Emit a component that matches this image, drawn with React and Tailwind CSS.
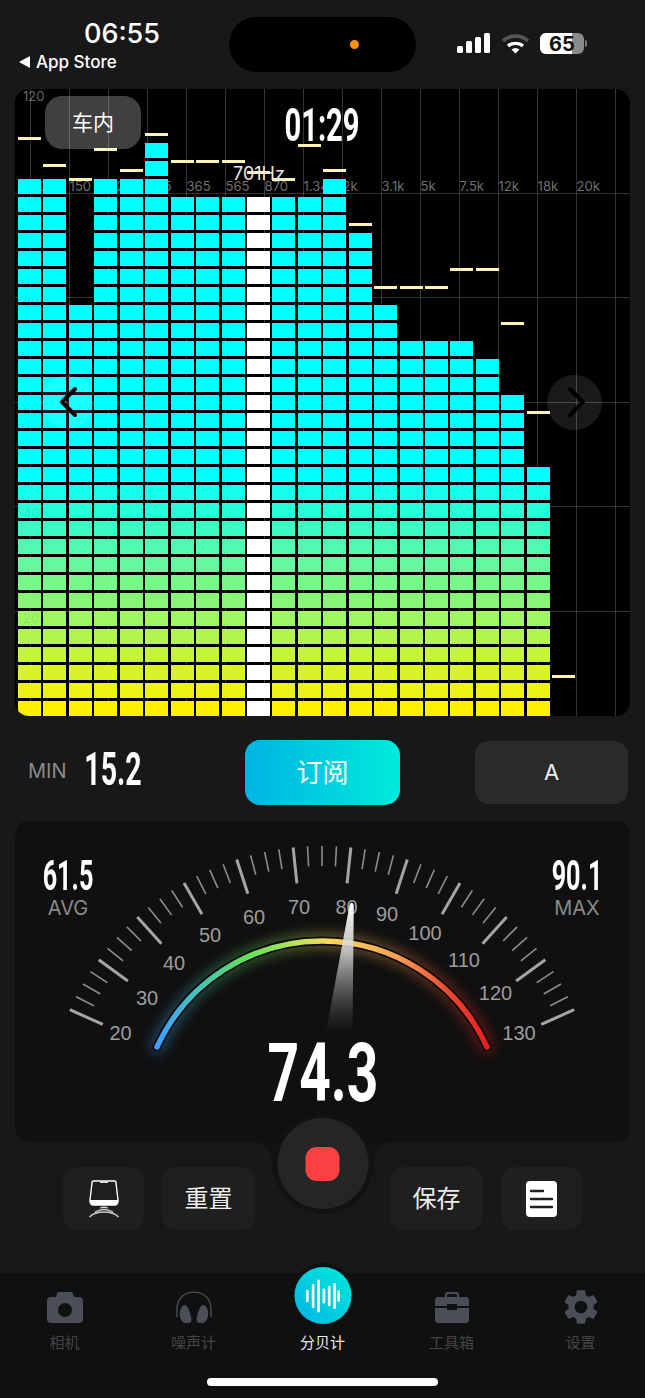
import { MdSettings } from 'react-icons/md';

const FONT = "font-['Inter','Noto_Sans_CJK_SC',sans-serif]";

// rows lit per column, and y of the peak marker (page px)
const COLUMNS = [
  { rows: 30, peak: 138 }, { rows: 30, peak: 165 }, { rows: 23, peak: 179 }, { rows: 30, peak: 149 },
  { rows: 30, peak: 170 }, { rows: 32, peak: 134 }, { rows: 29, peak: 161 }, { rows: 29, peak: 161 },
  { rows: 29, peak: 161 }, { rows: 29, peak: 172, white: true }, { rows: 29, peak: 179 }, { rows: 29, peak: 145 },
  { rows: 30, peak: 170 }, { rows: 27, peak: 224 }, { rows: 23, peak: 287 }, { rows: 21, peak: 287 },
  { rows: 21, peak: 287 }, { rows: 21, peak: 269 }, { rows: 20, peak: 269 }, { rows: 18, peak: 323 },
  { rows: 14, peak: 412 }, { rows: 0, peak: 676 },
];

const FREQS = ['60', '150', '220', '245', '365', '565', '870', '1.34', '2k', '3.1k', '5k', '7.5k', '12k', '18k', '20k'];
const DB_LINES = [104, 208, 313, 417, 522];
const DB_LABELS = [['100', 111], ['80', 214], ['60', 321], ['40', 425], ['20', 530]];

const rowColor = (i) => {
  const t = Math.min(i / 13, 1);
  return `rgb(${Math.round(255 * (1 - t))},${Math.round(241 + 14 * t)},${Math.round(255 * t)})`;
};

const Bars = () => (
  <div className="relative flex h-full items-end gap-[2.45px] pl-[3px]">
    {COLUMNS.map((col, c) => (
      <div key={c} className="relative flex h-full w-[23px] shrink-0 flex-col-reverse gap-[2.5px]">
        {Array.from({ length: col.rows }).map((_, i) => (
          <div
            key={i}
            className="h-[15.5px] shrink-0"
            style={{ background: col.white ? '#ffffff' : rowColor(i) }}
          />
        ))}
        <div
          className="absolute left-0 right-0 h-[3px] bg-[#fdf3b4]"
          style={{ bottom: 716 - col.peak - 1.5 }}
        />
      </div>
    ))}
  </div>
);

const Spectrum = () => (
  <div className="relative mx-[15px] h-[627px] overflow-hidden rounded-[14px] bg-black">
    <div className="absolute left-[8px] top-[0px] text-[13px] leading-[15px] text-[#666]">120</div>
    {FREQS.map((f, i) => (
      <div
        key={f}
        className="absolute top-[91px] text-[13px] leading-[12px] text-[#707070]"
        style={{ left: 15.6 + 39 * i }}
      >
        {f}
      </div>
    ))}
    {/* grid runs behind the bars */}
    {Array.from({ length: 16 }).map((_, i) => (
      <div key={i} className="absolute bottom-0 top-0 w-px bg-white/20" style={{ left: 15 + 39 * i }} />
    ))}
    {DB_LINES.map((y) => (
      <div key={y} className="absolute left-0 right-0 h-px bg-white/20" style={{ top: y }} />
    ))}
    <Bars />
    {DB_LABELS.map(([label, y]) => (
      <div key={label} className="absolute left-[8px] text-[13px] leading-[15px] text-black/10" style={{ top: y - 8 }}>
        {label}
      </div>
    ))}
    <div className="absolute left-[30px] top-[7px] flex h-[53px] w-[96px] items-center justify-center rounded-[17px] bg-white/25 text-[21px] text-white">
      车内
    </div>
    <div className="absolute left-[207px] top-[12px] w-[200px] origin-center scale-x-[0.62] text-center font-['Roboto'] text-[47px] font-bold leading-[47px] text-white">
      01:29
    </div>
    <div className="absolute left-[218px] top-[79px] text-[18px] leading-[12px] text-[#e8e8e8]">701Hz</div>
    <div className="absolute left-[26px] top-[286px] h-[54px] w-[54px] rounded-full bg-white/10" />
    <svg className="absolute left-[40px] top-[297px]" width="26" height="32" viewBox="0 0 26 32" fill="none">
      <path d="M20 3 L7 16 L20 29" stroke="#000" strokeWidth="4" strokeLinecap="round" strokeLinejoin="round" />
    </svg>
    <div className="absolute left-[532px] top-[286px] h-[55px] w-[55px] rounded-full bg-white/10" />
    <svg className="absolute left-[548px] top-[297px]" width="26" height="32" viewBox="0 0 26 32" fill="none">
      <path d="M7 3 L20 16 L7 29" stroke="#000" strokeWidth="4" strokeLinecap="round" strokeLinejoin="round" />
    </svg>
  </div>
);

const StatusBar = () => (
  <div className="relative flex h-[89px] items-start">
    <div className="w-[229px] pl-[19px]">
      <div className="mt-[18px] w-[206px] text-center text-[27px] font-medium leading-[32px] text-white">06:55</div>
      <div className="mt-[1px] flex items-center gap-[6px] text-[17px] font-medium leading-[22px] text-white">
        <svg width="11" height="12" viewBox="0 0 11 12"><path d="M11 0 V12 L0 6 Z" fill="#fff" /></svg>
        <span>App Store</span>
      </div>
    </div>
    <div className="mt-[17px] flex h-[55px] w-[187px] items-center justify-end rounded-full bg-black pr-[57px]">
      <div className="h-[9px] w-[9px] rounded-full bg-[#f7930e]" />
    </div>
    <div className="ml-[41px] mt-[33px] flex h-[21px] items-end">
      <div className="mb-[1px] flex items-end gap-[3px]">
        <div className="h-[7px] w-[6px] rounded-[1.5px] bg-white" />
        <div className="h-[12px] w-[6px] rounded-[1.5px] bg-white" />
        <div className="h-[16px] w-[6px] rounded-[1.5px] bg-white" />
        <div className="h-[20px] w-[6px] rounded-[1.5px] bg-white" />
      </div>
      <svg className="ml-[11px]" width="29" height="20" viewBox="0 0 29 20" fill="none">
        <path d="M2 7 C9 0.5 20 0.5 27 7" stroke="#555" strokeWidth="3.6" />
        <path d="M7 12 C11 8.5 18 8.5 22 12" stroke="#fff" strokeWidth="3.4" />
        <path d="M10.5 15.5 L14.5 19.5 L18.5 15.5 C16 13.5 13 13.5 10.5 15.5 Z" fill="#fff" />
      </svg>
      <div className="relative ml-[10px] flex h-[21px] w-[44px] items-center justify-center overflow-hidden rounded-[6px] bg-[#8a8a8a]">
        <div className="absolute bottom-0 left-0 top-0 w-[32px] bg-white" />
        <span className="relative text-[20px] font-bold leading-none text-[#111]">65</span>
      </div>
      <div className="mb-[7px] ml-[1px] h-[7px] w-[2px] rounded-r-full bg-[#777]" />
    </div>
  </div>
);

const ControlRow = () => (
  <div className="flex h-[105px] items-center pl-[28px] pr-[17px] pt-[8px]">
    <div className="relative h-[64px] w-[217px]">
      <span className="absolute left-0 top-[18px] text-[20px] leading-[24px] text-[#8a8a8a]">MIN</span>
      <span className="absolute left-[35px] top-[5px] w-[100px] origin-center scale-x-[0.62] text-center font-['Roboto'] text-[46px] font-bold leading-[46px] text-white">
        15.2
      </span>
    </div>
    <div className="flex h-[65px] w-[155px] items-center justify-center rounded-[15px] bg-gradient-to-r from-[#00b4e2] to-[#00eadb] text-[26px] text-white">
      订阅
    </div>
    <div className="ml-[75px] flex h-[63px] w-[153px] items-center justify-center rounded-[14px] bg-[#2a2a2a] text-[22px] text-[#eee]">
      A
    </div>
  </div>
);

const CX = 322;
const CY = 1122;
const R = 276;

const tickLine = (n) => {
  const a = ((-66 + n * 3) * Math.PI) / 180;
  const major = n % 4 === 0;
  const r2 = R - (major ? 36 : 20);
  return (
    <line
      key={n}
      x1={CX + R * Math.sin(a)}
      y1={CY - R * Math.cos(a)}
      x2={CX + r2 * Math.sin(a)}
      y2={CY - r2 * Math.cos(a)}
      stroke={major ? '#a4a4a4' : '#8c8c8c'}
      strokeWidth={major ? 3 : 1.6}
    />
  );
};

const GAUGE_LABELS = [
  ['20', 120.5, 1033], ['30', 147, 998], ['40', 174, 963], ['50', 210, 935], ['60', 254, 917], ['70', 299, 907],
  ['80', 346.5, 907], ['90', 387, 914], ['100', 425, 933], ['110', 464, 960], ['120', 495.5, 993], ['130', 519, 1033],
];

const ARC = 'M157 1047 A181.4 181.4 0 0 1 487 1047';

const Gauge = () => (
  <div className="relative mx-[15px] flex h-[321px] justify-between overflow-hidden rounded-[14px] bg-[#101010] px-[3px] pt-[38px]">
    <svg className="absolute inset-0" width="615" height="321" viewBox="15 821 615 321" fill="none">
      <defs>
        <linearGradient id="arcGrad" gradientUnits="userSpaceOnUse" x1="157" y1="0" x2="487" y2="0">
          <stop offset="0" stopColor="#3f9fff" />
          <stop offset="0.14" stopColor="#45c6b0" />
          <stop offset="0.27" stopColor="#5fe05a" />
          <stop offset="0.42" stopColor="#b6e35a" />
          <stop offset="0.52" stopColor="#f8d95a" />
          <stop offset="0.72" stopColor="#f9a155" />
          <stop offset="0.88" stopColor="#ee4a2e" />
          <stop offset="1" stopColor="#e81e1e" />
        </linearGradient>
        <linearGradient id="needleGrad" gradientUnits="userSpaceOnUse" x1="0" y1="903" x2="0" y2="1032">
          <stop offset="0" stopColor="#ffffff" />
          <stop offset="0.4" stopColor="#cfcfcf" stopOpacity="0.85" />
          <stop offset="1" stopColor="#777" stopOpacity="0" />
        </linearGradient>
        <filter id="glow" x="-20%" y="-40%" width="140%" height="180%">
          <feGaussianBlur stdDeviation="7" />
        </filter>
      </defs>
      {Array.from({ length: 45 }).map((_, n) => tickLine(n))}
      {GAUGE_LABELS.map(([t, x, y]) => (
        <text key={t} x={x} y={y} textAnchor="middle" dominantBaseline="central" fontFamily="Liberation Sans" fontSize="20" fill="#9c9c9c">
          {t}
        </text>
      ))}
      <path d={ARC} stroke="url(#arcGrad)" strokeWidth="12" strokeLinecap="round" opacity="0.45" filter="url(#glow)" />
      <path d={ARC} stroke="#0b0b0b" strokeWidth="9" strokeLinecap="round" />
      <path d={ARC} stroke="url(#arcGrad)" strokeWidth="5.5" strokeLinecap="round" />
      <path d="M349.6 905 Q351.7 900 353.8 905 L352.5 1032 L326 1032 Z" fill="url(#needleGrad)" />
    </svg>
    <StatBlock value="61.5" label="AVG" />
    <StatBlock value="90.1" label="MAX" />
    <div className="absolute left-[158px] top-[212px] w-[300px] origin-center scale-x-[0.68] text-center font-['Roboto'] text-[81px] font-bold leading-[81px] text-white">
      74.3
    </div>
  </div>
);

const StatBlock = ({ value, label }) => (
  <div className="relative flex w-[100px] flex-col items-center">
    <div className="w-full origin-center scale-x-[0.6] text-center font-['Roboto'] text-[42px] font-bold leading-[34px] text-white">
      {value}
    </div>
    <div className="mt-[3px] text-[20px] leading-[24px] text-[#8a8a8a]">{label}</div>
  </div>
);

const ActionButton = ({ className, children }) => (
  <div className={`flex h-[63px] items-center justify-center rounded-[14px] bg-[#1f1f1f] text-[24px] text-[#eee] ${className}`}>
    {children}
  </div>
);

const PhoneStandIcon = () => (
  <svg width="30" height="38" viewBox="0 0 30 38" fill="none">
    <path d="M4.5 1 H25.5 Q27 1 27 3 L29 20 Q29.3 25 26 25 H4 Q0.7 25 1 20 L3 3 Q3 1 4.5 1 Z" stroke="#fff" strokeWidth="1.4" />
    <path d="M1 20 H29 Q29.3 25 26 25 H4 Q0.7 25 1 20 Z" fill="#fff" />
    <rect x="11" y="1" width="8" height="2" fill="#ddd" />
    <path d="M11 28 Q15 26.5 19 28 M6 32 Q15 27 24 32 M0.5 37 Q5 32 15 32 Q25 32 29.5 37" stroke="#ccc" strokeWidth="1.3" />
  </svg>
);

const DocIcon = () => (
  <svg width="31" height="36" viewBox="0 0 31 36" fill="none">
    <rect width="31" height="36" rx="4" fill="#fff" />
    <path d="M5 10 H17 M5 18 H26 M5 26 H26" stroke="#1f1f1f" strokeWidth="2.4" strokeLinecap="round" />
  </svg>
);

const ButtonRow = () => (
  <div className="relative flex h-[131px] items-start justify-between px-[63px] pt-[25px]">
    {/* notch under the record button */}
    <div className="absolute left-[272px] top-0 h-[30px] w-[102px] bg-[#121212]" />
    <div className="absolute left-[252px] top-0 h-[20px] w-[20px] bg-[#121212]">
      <div className="h-full w-full rounded-tr-[20px] bg-[#181818]" />
    </div>
    <div className="absolute left-[374px] top-0 h-[20px] w-[20px] bg-[#121212]">
      <div className="h-full w-full rounded-tl-[20px] bg-[#181818]" />
    </div>
    <div className="relative flex gap-[18px]">
      <ActionButton className="w-[81px]"><PhoneStandIcon /></ActionButton>
      <ActionButton className="w-[93px]">重置</ActionButton>
    </div>
    <div className="relative flex gap-[18px]">
      <ActionButton className="w-[93px]">保存</ActionButton>
      <ActionButton className="w-[81px]"><DocIcon /></ActionButton>
    </div>
    <div className="absolute left-1/2 top-[-29px] flex h-[101px] w-[101px] -translate-x-1/2 items-center justify-center rounded-full bg-[#121212]">
      <div className="flex h-[91px] w-[91px] items-center justify-center rounded-full bg-[#252525]">
        <div className="h-[34px] w-[34px] rounded-[11px] bg-[#f94144]" />
      </div>
    </div>
  </div>
);

const TAB_GREY = '#4a4f57';

const CameraIcon = () => (
  <svg width="36" height="31" viewBox="0 0 36 31">
    <path
      fillRule="evenodd"
      fill={TAB_GREY}
      d="M12 0 H24 Q26 0 26.5 3 L27 5 H32 Q36 5 36 9 V27 Q36 31 32 31 H4 Q0 31 0 27 V9 Q0 5 4 5 H9 L9.5 3 Q10 0 12 0 Z M18 11 A7 7 0 1 0 18 25 A7 7 0 1 0 18 11 Z"
    />
  </svg>
);

const HeadphonesIcon = () => (
  <svg width="38" height="34" viewBox="0 0 38 34" fill="none">
    <path d="M2 27 V19 C2 -3.5 36 -3.5 36 19 V27" stroke={TAB_GREY} strokeWidth="1.3" />
    <path d="M10 15 C13 15 16 24 16.5 30 Q16.5 33 13 33 H10 C7 33 4 27 5 22 C5.5 18 7.5 15 10 15 Z" fill={TAB_GREY} />
    <path d="M28 15 C25 15 22 24 21.5 30 Q21.5 33 25 33 H28 C31 33 34 27 33 22 C32.5 18 30.5 15 28 15 Z" fill={TAB_GREY} />
  </svg>
);

const ToolboxIcon = () => (
  <svg width="34" height="31" viewBox="0 0 34 31" fill="none">
    <path d="M11 6 V3 Q11 1 13 1 H21 Q23 1 23 3 V6" stroke={TAB_GREY} strokeWidth="2" />
    <path d="M3 5 H31 Q34 5 34 8 V14 H22 V12 H12 V14 H0 V8 Q0 5 3 5 Z" fill={TAB_GREY} />
    <path d="M0 16 H12 V18 H22 V16 H34 V28 Q34 31 31 31 H3 Q0 31 0 28 Z" fill={TAB_GREY} />
  </svg>
);

const WaveIcon = () => (
  <svg width="36" height="34" viewBox="0 0 40 38" fill="none" stroke="#fff" strokeWidth="3" strokeLinecap="round">
    <path d="M3 13.5 V24.5 M9.5 7 V31 M15.5 2 V36 M21.5 12 V26 M27.5 9 V29 M33.5 6 V32 M38 14 V24" />
  </svg>
);

const TABS = [
  { label: '相机', icon: <CameraIcon /> },
  { label: '噪声计', icon: <HeadphonesIcon /> },
  { label: '分贝计', active: true },
  { label: '工具箱', icon: <ToolboxIcon /> },
  { label: '设置', icon: <MdSettings size={42} color={TAB_GREY} /> },
];

const TabBar = () => (
  <div className="relative grid h-[125px] grid-cols-5 bg-[#101010]">
    {TABS.map((tab) => (
      <div key={tab.label} className="flex flex-col items-center">
        <div className="relative mt-[17px] flex h-[34px] items-center justify-center">
          {tab.active ? (
            <div className="absolute top-[-27px] left-1/2 flex h-[65px] w-[65px] -translate-x-1/2 items-center justify-center rounded-full bg-[#101010]">
              <div className="flex h-[57px] w-[57px] items-center justify-center rounded-full bg-gradient-to-tr from-[#00b4e2] to-[#00eadb]">
                <WaveIcon />
              </div>
            </div>
          ) : (
            tab.icon
          )}
        </div>
        <div className={`mt-[9px] text-[15px] leading-[20px] ${tab.active ? 'text-[#e8e8e8]' : 'text-[#444]'}`}>
          {tab.label}
        </div>
      </div>
    ))}
    <div className="absolute bottom-[12px] left-[207px] h-[8px] w-[231px] rounded-full bg-white" />
  </div>
);

export default function App() {
  return (
    <div className={`h-[1398px] w-[645px] overflow-hidden bg-[#181818] ${FONT}`}>
      <StatusBar />
      <Spectrum />
      <ControlRow />
      <Gauge />
      <ButtonRow />
      <TabBar />
    </div>
  );
}
